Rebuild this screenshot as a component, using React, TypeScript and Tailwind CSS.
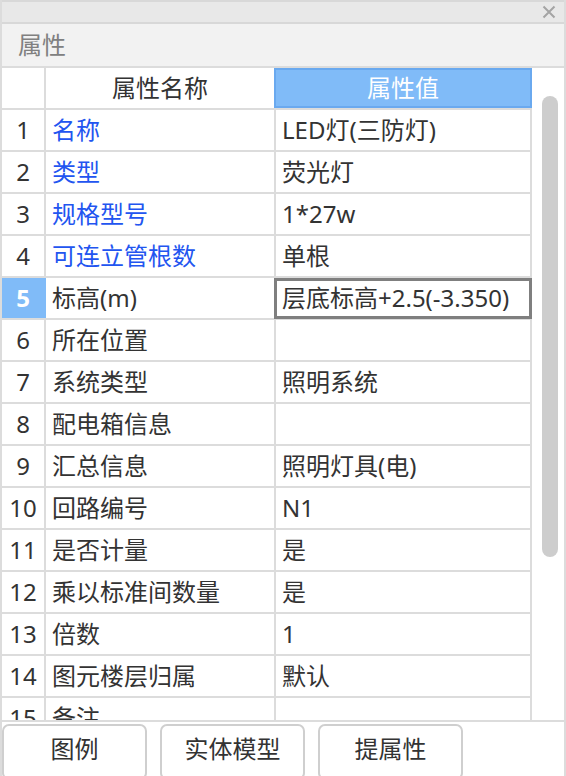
type Row = {
  no: number;
  name: string;
  value: string;
  blue?: boolean;
};

const rows: Row[] = [
  { no: 1, name: "名称", value: "LED灯(三防灯)", blue: true },
  { no: 2, name: "类型", value: "荧光灯", blue: true },
  { no: 3, name: "规格型号", value: "1*27w", blue: true },
  { no: 4, name: "可连立管根数", value: "单根", blue: true },
  { no: 5, name: "标高(m)", value: "层底标高+2.5(-3.350)" },
  { no: 6, name: "所在位置", value: "" },
  { no: 7, name: "系统类型", value: "照明系统" },
  { no: 8, name: "配电箱信息", value: "" },
  { no: 9, name: "汇总信息", value: "照明灯具(电)" },
  { no: 10, name: "回路编号", value: "N1" },
  { no: 11, name: "是否计量", value: "是" },
  { no: 12, name: "乘以标准间数量", value: "是" },
  { no: 13, name: "倍数", value: "1" },
  { no: 14, name: "图元楼层归属", value: "默认" },
  { no: 15, name: "备注", value: "" },
];

const selected = 5;

export default function App() {
  return (
    <div
      className="w-[566px] h-[776px] flex flex-col bg-white border-x-2 border-[#dcdcdc] overflow-hidden text-[24px] text-[#333]"
      style={{ fontFamily: '"Noto Sans", "Noto Sans CJK SC", sans-serif' }}
    >
      {/* window bar */}
      <div className="h-[24px] shrink-0 flex items-center justify-end pr-[8px] bg-[#e8e8e8] border-y-2 border-[#d8d8d8]">
        <svg width="14" height="14" viewBox="0 0 14 14" className="block">
          <path d="M1.5 1.5 L12.5 12.5 M12.5 1.5 L1.5 12.5" stroke="#a4a4a4" strokeWidth="2" fill="none" />
        </svg>
      </div>

      {/* panel title */}
      <div className="h-[44px] shrink-0 flex items-center pl-[16px] bg-[#f2f2f2] border-b-2 border-[#dcdcdc] text-[#808080] leading-none">
        属性
      </div>

      {/* grid + scrollbar */}
      <div className="h-[654px] shrink-0 flex border-b-2 border-[#dcdcdc]">
        <div className="w-[530px] shrink-0 flex flex-col overflow-hidden">
          <div className="h-[42px] shrink-0 flex border-b-2 border-[#dcdcdc] leading-none">
            <div className="w-[44px] shrink-0 border-r-2 border-[#dcdcdc]" />
            <div className="w-[228px] shrink-0 flex items-center justify-center">属性名称</div>
            <div className="w-[258px] shrink-0 flex items-center justify-center bg-[#80bbf8] border-2 border-[#6aa9ef] text-white">
              属性值
            </div>
          </div>

          {rows.map((r) => (
            <div key={r.no} className="h-[42px] shrink-0 flex border-b-2 border-[#dcdcdc] leading-none">
              <div
                className={
                  r.no === selected
                    ? "w-[44px] shrink-0 flex items-center justify-center border-r-2 border-[#80bbf8] bg-[#80bbf8] text-white font-bold"
                    : "w-[44px] shrink-0 flex items-center justify-center border-r-2 border-[#dcdcdc]"
                }
              >
                {r.no}
              </div>
              <div
                className={
                  r.blue
                    ? "w-[230px] shrink-0 flex items-center pl-[6px] border-r-2 border-[#dcdcdc] text-[#2255f0]"
                    : "w-[230px] shrink-0 flex items-center pl-[6px] border-r-2 border-[#dcdcdc]"
                }
              >
                {r.name}
              </div>
              <div className="relative w-[256px] shrink-0 flex items-center pl-[6px] border-r-2 border-[#dcdcdc] whitespace-nowrap">
                {r.value}
                {r.no === selected && (
                  <div className="absolute -left-[2px] top-0 -right-[2px] -bottom-[1px] border-[3px] border-[#7f7f7f]" />
                )}
              </div>
            </div>
          ))}
        </div>

        <div className="w-[32px] shrink-0 pt-[28px] pl-[10px]">
          <div className="w-[16px] h-[461px] rounded-full bg-[#cdcdcd]" />
        </div>
      </div>

      {/* buttons */}
      <div className="flex gap-[13px] pt-[2px]">
        {["图例", "实体模型", "提属性"].map((b) => (
          <button
            key={b}
            className="w-[145px] h-[56px] flex items-start justify-center pt-[11px] rounded-[7px] border-2 border-[#cfcfcf] bg-white leading-none text-[#333]"
          >
            {b}
          </button>
        ))}
      </div>
    </div>
  );
}
